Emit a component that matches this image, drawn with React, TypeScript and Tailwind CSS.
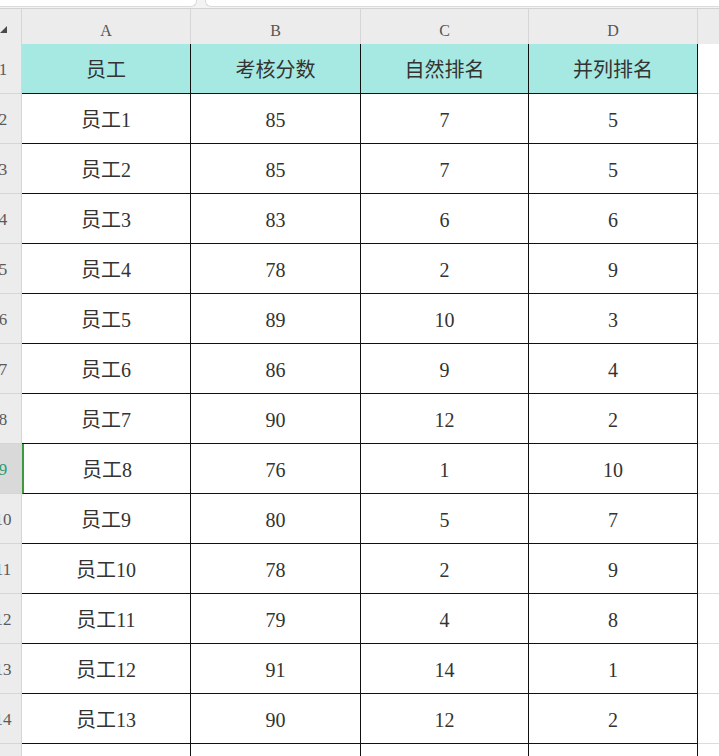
import React from "react";

const rows: [string, string, string, string][] = [
  ["员工1", "85", "7", "5"],
  ["员工2", "85", "7", "5"],
  ["员工3", "83", "6", "6"],
  ["员工4", "78", "2", "9"],
  ["员工5", "89", "10", "3"],
  ["员工6", "86", "9", "4"],
  ["员工7", "90", "12", "2"],
  ["员工8", "76", "1", "10"],
  ["员工9", "80", "5", "7"],
  ["员工10", "78", "2", "9"],
  ["员工11", "79", "4", "8"],
  ["员工12", "91", "14", "1"],
  ["员工13", "90", "12", "2"],
];

const cols = "grid grid-cols-[22px_169px_170px_168px_169px_1fr]";

const RowHead = ({ n, active }: { n: string; active?: boolean }) => (
  <div
    className={
      "h-full overflow-hidden border-b border-r border-[#d6d6d6] flex items-center pt-[2px] " +
      (active ? "bg-[#d9d9d9] text-[#2f9a73]" : "bg-[#ececec] text-[#5a5a5a]")
    }
  >
    <div className="-ml-4 w-[38px] shrink-0 text-center text-[17px]">{n}</div>
  </div>
);

const Cell = ({ children, selected }: { children?: React.ReactNode; selected?: boolean }) => (
  <div
    className={
      "h-full flex items-center justify-center pt-[3px] border-b border-r border-[#111] text-[20px] text-[#333] " +
      (selected ? "border-l-2 border-l-[#3d9a3d]" : "")
    }
  >
    {children}
  </div>
);

export default function App() {
  return (
    <div
      className="w-[719px] h-[756px] overflow-hidden bg-white"
      style={{ fontFamily: '"Liberation Serif", "Noto Sans CJK SC", serif' }}
    >
      {/* window strip */}
      <div className="h-[9px] flex bg-[#f3f3f3] border-b border-[#d2d2d2]">
        <div className="w-[197px] h-[7px] bg-white rounded-br-[6px] border-b border-r border-[#dadada]" />
        <div className="w-[8px]" />
        <div className="flex-1 h-[7px] bg-white rounded-bl-[6px] border-b border-l border-[#dadada]" />
      </div>

      {/* column letters */}
      <div className={cols + " h-[35px] bg-[#ececec] text-[16px] text-[#555]"}>
        <div className="flex items-center border-r border-[#d6d6d6]">
          <svg width="8" height="8" viewBox="0 0 8 8" className="mt-[6px]">
            <path d="M7 0 L7 7 L0 7 Z" fill="#4a4a4a" />
          </svg>
        </div>
        {["A", "B", "C", "D"].map((c) => (
          <div key={c} className="flex items-center justify-center pt-[8px] border-r border-[#d6d6d6]">
            {c}
          </div>
        ))}
        <div />
      </div>

      {/* header row */}
      <div className={cols + " h-[50px]"}>
        <RowHead n="1" />
        {["员工", "考核分数", "自然排名", "并列排名"].map((h) => (
          <div
            key={h}
            className="h-full flex items-center justify-center pt-[3px] bg-[#a6e9e2] border-b border-r border-[#111] text-[20px] text-[#333]"
          >
            {h}
          </div>
        ))}
        <div className="border-b border-[#dcdcdc]" />
      </div>

      {rows.map((r, i) => (
        <div key={i} className={cols + " h-[50px]"}>
          <RowHead n={String(i + 2)} active={i + 2 === 9} />
          <Cell selected={i + 2 === 9}>{r[0]}</Cell>
          <Cell>{r[1]}</Cell>
          <Cell>{r[2]}</Cell>
          <Cell>{r[3]}</Cell>
          <div className="border-b border-[#dcdcdc]" />
        </div>
      ))}

      <div className={cols + " h-[50px]"}>
        <RowHead n="15" />
        <Cell />
        <Cell />
        <Cell />
        <Cell />
        <div />
      </div>
    </div>
  );
}
